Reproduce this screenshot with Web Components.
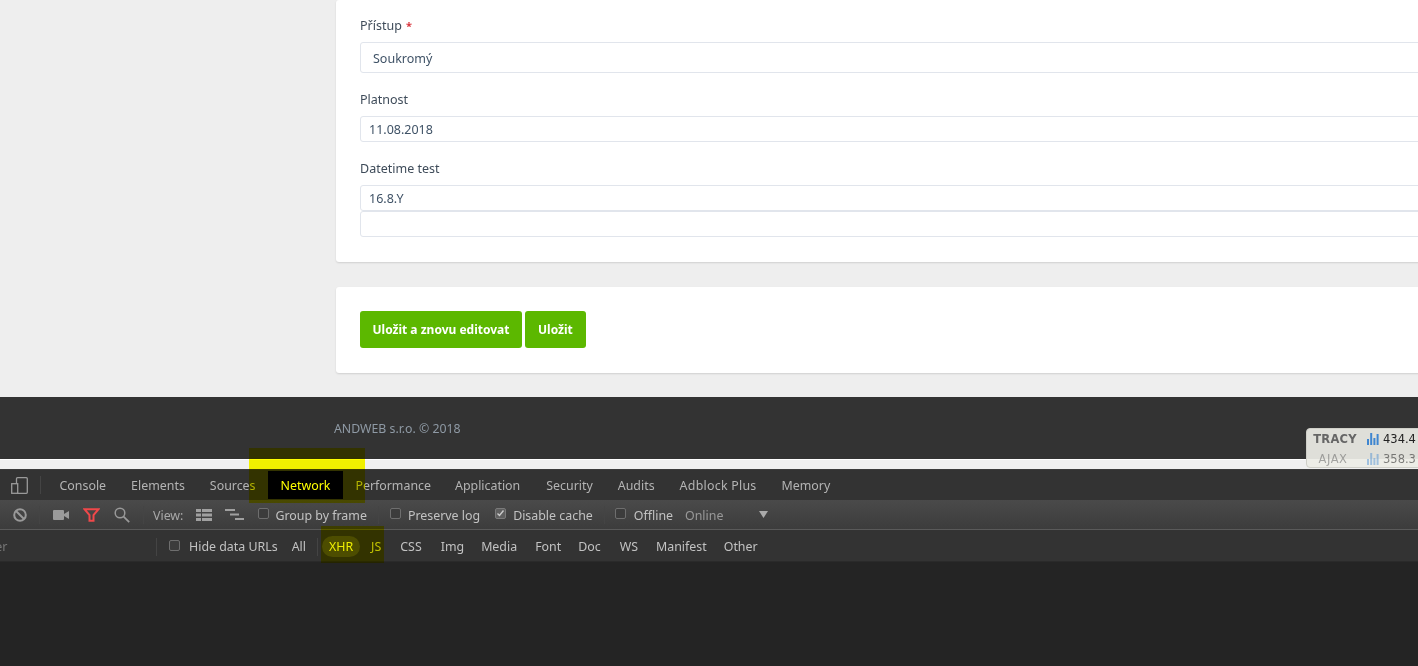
<!DOCTYPE html>
<html lang="cs">
<head>
<meta charset="utf-8">
<title>Formulář</title>
<style>
html, body { margin: 0; height: 666px; overflow: hidden; background: #eee; }
body { position: relative; display: flex; flex-direction: column; font-family: "Noto Sans", "Open Sans", sans-serif; }
.cards { height: 397px; flex: none; }
</style>
</head>
<body>
<div class="cards">
  <form-card style="height:262px; padding-top:17px">
    <form-field label="Přístup" required size="select" value="Soukromý"></form-field>
    <form-field label="Platnost" value="11.08.2018"></form-field>
    <form-field label="Datetime test" value="16.8.Y" extra></form-field>
  </form-card>
  <form-card style="height:86px; margin-top:25px; padding-top:24px">
    <app-button>Uložit a znovu editovat</app-button>
    <app-button style="padding:0 13px">Uložit</app-button>
  </form-card>
</div>
<page-footer>ANDWEB s.r.o. © 2018</page-footer>
<dev-tools></dev-tools>
<tracy-bar></tracy-bar>
<marker-box style="left:249px; top:448px; width:116px; height:55px"></marker-box>
<marker-box style="left:321px; top:526px; width:63px; height:37px"></marker-box>

<script>
class FormCard extends HTMLElement {
  constructor(){
    super()
    this.attachShadow({mode: 'open'})
    this.shadowRoot.innerHTML = `
    <style>
    :host{
      display: flex;
      flex-wrap: wrap;
      align-content: flex-start;
      gap: 3px;
      box-sizing: border-box;
      width: 1200px;
      margin-left: 336px;
      padding-left: 24px;
      background: #fff;
      border-radius: 3px;
      box-shadow: 0 1px 2px rgba(0,0,0,.13);
    }
    </style>
    <slot></slot>`
  }
}
customElements.define('form-card', FormCard)

class FormField extends HTMLElement {
  constructor(){
    super()
    this.attachShadow({mode: 'open'})
  }
  connectedCallback(){
    const isSelect = this.getAttribute('size') == 'select'
    const star = this.hasAttribute('required') ? '<span class="star">*</span>' : ''
    const extra = this.hasAttribute('extra') ? '<div class="input"></div>' : ''
    this.shadowRoot.innerHTML = `
    <style>
    :host{
      display: block;
      width: 1170px;
      margin-bottom: 15px;
      font-size: 12.5px;
      color: #3e4b59;
    }
    .label{ height: 17px; line-height: 17px; margin-bottom: 8px; }
    .star{ color: #d9363e; margin-left: 4px; font-size: 11px; font-weight: 700; }
    .input{
      box-sizing: border-box;
      height: 26px;
      line-height: 25px;
      padding-left: 8px;
      border: 1px solid #e1e5ec;
      border-radius: 3px;
      background: #fff;
      color: #3f5266;
    }
    .input.select{ height: 31px; line-height: 31px; padding-left: 12px; }
    </style>
    <div class="label">${this.getAttribute('label')}${star}</div>
    <div class="input ${isSelect ? 'select' : ''}">${this.getAttribute('value')}</div>
    ${extra}`
  }
}
customElements.define('form-field', FormField)

class AppButton extends HTMLElement {
  constructor(){
    super()
    this.attachShadow({mode: 'open'})
    this.shadowRoot.innerHTML = `
    <style>
    :host{
      display: flex;
      align-items: center;
      box-sizing: border-box;
      height: 37px;
      padding: 0 12.5px;
      background: #5cb800;
      border-radius: 3px;
      color: #fff;
      font-size: 12px;
      font-weight: 700;
      white-space: nowrap;
    }
    </style>
    <slot></slot>`
  }
}
customElements.define('app-button', AppButton)

class PageFooter extends HTMLElement {
  constructor(){
    super()
    this.attachShadow({mode: 'open'})
    this.shadowRoot.innerHTML = `
    <style>
    :host{
      display: block;
      flex: none;
      box-sizing: border-box;
      height: 62px;
      padding: 23px 0 0 334px;
      background: #333;
      color: #8f9aa5;
      font-size: 12.3px;
      line-height: 17px;
    }
    </style>
    <slot></slot>`
  }
}
customElements.define('page-footer', PageFooter)

class DtTab extends HTMLElement {
  constructor(){
    super()
    this.attachShadow({mode: 'open'})
    this.shadowRoot.innerHTML = `
    <style>
    :host{
      display: flex;
      align-items: center;
      padding: 0 12.5px;
      color: #b4b4b4;
      font-size: 12.4px;
      white-space: nowrap;
    }
    :host([active]){ background: #000; color: #fff; margin: 1px 0; }
    </style>
    <slot></slot>`
  }
}
customElements.define('dt-tab', DtTab)

class DtCheck extends HTMLElement {
  constructor(){
    super()
    this.attachShadow({mode: 'open'})
    this.shadowRoot.innerHTML = `
    <style>
    :host{
      display: flex;
      align-items: center;
      gap: 7px;
      color: #c2c2c2;
      font-size: 12.4px;
      white-space: nowrap;
    }
    .box{
      box-sizing: border-box;
      width: 11px;
      height: 11px;
      margin-top: -3px;
      border: 1px solid #6e6e6e;
      border-radius: 2px;
      background: #3c3c3c;
    }
    svg{ display: none; width: 9px; height: 9px; }
    :host([checked]) svg{ display: block; }
    :host([checked]) .box{ background: #5f5f5f; border-color: #7a7a7a; }
    </style>
    <div class="box"><svg viewBox="0 0 9 9"><path d="M1.5 4.5l2 2 4-5" fill="none" stroke="#ccc" stroke-width="1.4"/></svg></div>
    <slot></slot>`
  }
}
customElements.define('dt-check', DtCheck)

class DevTools extends HTMLElement {
  constructor(){
    super()
    this.attachShadow({mode: 'open'})
    this.shadowRoot.innerHTML = `
    <style>
    :host{
      display: flex;
      flex-direction: column;
      flex: none;
      height: 207px;
      background: #242424;
      font-size: 12.4px;
      color: #bbb;
    }
    .strip{ height: 11px; flex: none; box-sizing: border-box; background: #f0f0f0; border-top: 1px solid #fff; border-bottom: 1px solid #3c3c3c; }
    .tabs{ display: flex; height: 30px; flex: none; background: #333; padding-left: 11px; box-sizing: border-box; align-items: stretch; }
    .tabs svg{ align-self: center; flex: none; }
    .sep{ width: 1px; height: 18px; background: #444; align-self: center; flex: none; }
    .tools{ display: flex; align-items: center; height: 30px; padding-top: 1px; flex: none; box-sizing: border-box; background: linear-gradient(#4a4a4a, #3c3c3c); border-bottom: 1px solid #5a5a5a; }
    .tools svg{ margin-top: -1px; }
    .filters{ display: flex; align-items: center; height: 32px; padding-top: 2px; flex: none; box-sizing: border-box; background: #333; border-bottom: 1px solid #2a2a2a; }
    .ph{ width: 156px; color: #777; flex: none; overflow: hidden; }
    .f{ color: #c2c2c2; white-space: nowrap; flex: none; }
    .xhr{ background: #4d4d4d; color: #eee; border-radius: 11px; padding: 0 7px; height: 21px; line-height: 21px; }
    svg{ display: block; }
    </style>
    <div class="strip"></div>
    <div class="tabs">
      <svg width="17" height="17" viewBox="0 0 17 17" fill="none" stroke="#9a9a9a" stroke-width="1.3">
        <rect x="5.5" y=".7" width="10.8" height="15.6" rx="1"/>
        <rect x=".7" y="6.7" width="6" height="9.6" fill="#333"/>
      </svg>
      <div class="sep" style="margin:0 6px 0 12px"></div>
      <dt-tab>Console</dt-tab><dt-tab>Elements</dt-tab><dt-tab>Sources</dt-tab><dt-tab active>Network</dt-tab><dt-tab>Performance</dt-tab><dt-tab style="margin-left:-1px">Application</dt-tab><dt-tab style="margin-left:1px">Security</dt-tab><dt-tab>Audits</dt-tab><dt-tab style="letter-spacing:.25px">Adblock Plus</dt-tab><dt-tab>Memory</dt-tab>
    </div>
    <div class="tools">
      <svg style="margin-left:13px" width="14" height="14" viewBox="0 0 14 14" fill="none" stroke="#999" stroke-width="2"><circle cx="7" cy="7" r="5.8"/><path d="M3 3l8 8"/></svg>
      <div class="sep" style="margin-left:12px"></div>
      <svg style="margin-left:13px" width="16" height="10" viewBox="0 0 16 10" fill="#9a9a9a"><rect width="11" height="10" rx="1"/><path d="M11 4l5-3v8l-5-3z"/></svg>
      <svg style="margin-left:14px" width="17" height="14" viewBox="0 0 17 14" fill="none" stroke="#f0484a" stroke-width="2"><path d="M1.5 1.2h14L10.5 7v5.8h-4V7z"/></svg>
      <svg style="margin-left:14px" width="16" height="16" viewBox="0 0 16 16" fill="none" stroke="#999" stroke-width="1.5"><circle cx="6" cy="6" r="4.8"/><path d="M9.6 9.6l5.6 5.6" stroke-width="1.8"/></svg>
      <div class="sep" style="margin-left:13px"></div>
      <span class="f" style="margin-left:9px; color:#a8a8a8">View:</span>
      <svg style="margin-left:13px" width="16" height="12" viewBox="0 0 16 12" fill="#a0a0a0"><path d="M0 0h5v3H0zM6 0h10v3H6zM0 4.5h5v3H0zM6 4.5h10v3H6zM0 9h5v3H0zM6 9h10v3H6z"/></svg>
      <svg style="margin-left:13px" width="19" height="12" viewBox="0 0 19 12" fill="#a0a0a0"><path d="M0 0h10v2H0zM5 4.5h9v2H5zM10 9h9v2h-9z"/></svg>
      <dt-check style="margin-left:14px; gap:6px">Group by frame</dt-check>
      <div class="sep" style="margin-left:11px"></div>
      <dt-check style="margin-left:11px">Preserve log</dt-check>
      <dt-check checked style="margin-left:15px">Disable cache</dt-check>
      <div class="sep" style="margin-left:11px"></div>
      <dt-check style="margin-left:10px; gap:8px">Offline</dt-check>
      <span class="f" style="margin-left:12px; color:#999">Online</span>
      <svg style="margin-left:36px" width="9" height="7" viewBox="0 0 9 7" fill="#aaa"><path d="M0 0h9L4.5 7z"/></svg>
    </div>
    <div class="filters">
      <div class="ph"><span style="display:block; margin-left:-22px">Filter</span></div>
      <div class="sep"></div>
      <dt-check style="margin-left:12px; gap:9px">Hide data URLs</dt-check>
      <span class="f" style="margin-left:14px">All</span>
      <div class="sep" style="margin-left:11px"></div>
      <span class="f xhr" style="margin-left:4px">XHR</span>
      <span class="f" style="margin-left:11px">JS</span>
      <span class="f" style="margin-left:19px">CSS</span>
      <span class="f" style="margin-left:19px">Img</span>
      <span class="f" style="margin-left:17px">Media</span>
      <span class="f" style="margin-left:18px">Font</span>
      <span class="f" style="margin-left:17px">Doc</span>
      <span class="f" style="margin-left:19px">WS</span>
      <span class="f" style="margin-left:18px">Manifest</span>
      <span class="f" style="margin-left:17px">Other</span>
    </div>`
  }
}
customElements.define('dev-tools', DevTools)

class TracyBar extends HTMLElement {
  constructor(){
    super()
    this.attachShadow({mode: 'open'})
    const bars = o => `<svg width="12" height="13" viewBox="0 0 12 13" fill="#3f86d0" opacity="${o}"><path d="M0 7h2v6H0zM3.2 1h2v12h-2zM6.4 6h2v7h-2zM9.6 2h2v11h-2z"/></svg>`
    this.shadowRoot.innerHTML = `
    <style>
    :host{
      position: absolute;
      left: 1306px;
      top: 428px;
      width: 130px;
      height: 40px;
      box-sizing: border-box;
      border: 1px solid #cfcfc8;
      border-radius: 4px 0 0 4px;
      background: rgba(237,237,230,.93);
      font-family: "DejaVu Sans", "Liberation Sans", sans-serif;
      font-size: 11.5px;
    }
    .row{ display: flex; align-items: center; height: 19px; white-space: nowrap; }
    .row + .row{ height: 20px; padding-top: 1px; box-sizing: border-box; }
    .row span:first-child{ width: 56px; margin-right: 4px; text-align: center; font-weight: 700; color: #666; flex: none; letter-spacing: .2px; }
    .row span:last-child{ margin-left: 4px; color: #222; }
    .ajax{ opacity: .55; }
    .ajax span:first-child{ font-weight: 400; letter-spacing: .5px; margin-left: -2px; margin-right: 6px; }
    </style>
    <div class="row"><span>TRACY</span>${bars(1)}<span>434.4</span></div>
    <div class="row ajax"><span>AJAX</span>${bars(.8)}<span>358.3</span></div>`
  }
}
customElements.define('tracy-bar', TracyBar)

class MarkerBox extends HTMLElement {
  constructor(){
    super()
    this.attachShadow({mode: 'open'})
    this.shadowRoot.innerHTML = `
    <style>
    :host{
      position: absolute;
      display: block;
      background: #ffff00;
      mix-blend-mode: multiply;
    }
    </style>`
  }
}
customElements.define('marker-box', MarkerBox)
</script>
</body>
</html>
